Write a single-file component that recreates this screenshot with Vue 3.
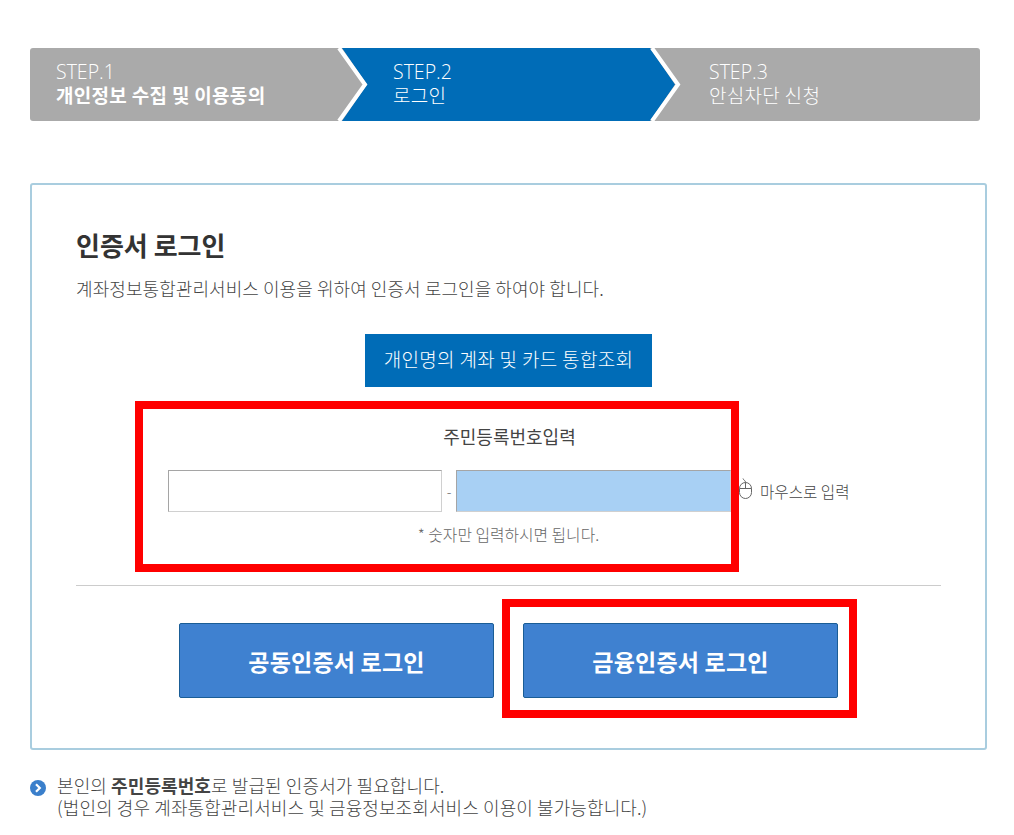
<template>
  <div class="page">
    <div class="steps">
      <svg class="steps-art" width="950" height="73" viewBox="0 0 950 73" aria-hidden="true">
        <polygon points="312,0 620,0 645,36.5 620,73 312,73 337,36.5" fill="#006cb7" />
        <polyline points="309,0 335,36.5 309,73" fill="none" stroke="#fff" stroke-width="4" />
        <polyline points="622,0 648,36.5 622,73" fill="none" stroke="#fff" stroke-width="4" />
      </svg>
      <div class="step s1"><span>STEP.1</span><strong>개인정보 수집 및 이용동의</strong></div>
      <div class="step s2"><span>STEP.2</span><span class="ko">로그인</span></div>
      <div class="step s3"><span>STEP.3</span><span class="ko">안심차단 신청</span></div>
    </div>

    <section class="card">
      <h1>인증서 로그인</h1>
      <p class="desc">계좌정보통합관리서비스 이용을 위하여 인증서 로그인을 하여야 합니다.</p>
      <div class="primary">개인명의 계좌 및 카드 통합조회</div>
      <div class="id-wrap">
        <div class="id-label">주민등록번호입력</div>
        <div class="id-row">
          <div class="field"></div>
          <span class="dash">-</span>
          <div class="field filled"></div>
          <svg class="mouse" width="16" height="24" viewBox="0 0 16 24" aria-hidden="true">
            <rect x="1.5" y="5.5" width="12" height="16" rx="6" fill="#fff" stroke="#666" />
            <path d="M1.5 11.5h12M7.5 5.5v6M7.5 5.5C7.5 3 5.5 3.5 5 1.5" fill="none" stroke="#666" />
          </svg>
          <span class="mouse-text">마우스로 입력</span>
        </div>
        <div class="hint">* 숫자만 입력하시면 됩니다.</div>
        <div class="mark mark-id"></div>
      </div>
      <hr />
      <div class="logins">
        <button class="login" type="button">공동인증서 로그인</button>
        <button class="login" type="button">금융인증서 로그인<span class="mark mark-login"></span></button>
      </div>
    </section>

    <div class="note">
      <svg class="bullet" width="16" height="16" viewBox="0 0 16 16" aria-hidden="true">
        <circle cx="8" cy="8" r="8" fill="#3a7fcb" />
        <path d="M6 4.2 9.8 8 6 11.8" fill="none" stroke="#fff" stroke-width="2.2" />
      </svg>
      <p>본인의 <b>주민등록번호</b>로 발급된 인증서가 필요합니다.<br />(법인의 경우 계좌통합관리서비스 및 금융정보조회서비스 이용이 불가능합니다.)</p>
    </div>
  </div>
</template>

<script setup>
</script>

<style>
html, body { background: #fff; }
</style>

<style scoped>
.page {
  width: 1014px;
  height: 835px;
  overflow: hidden;
  box-sizing: border-box;
  padding: 48px 27px 0 30px;
  font-family: "Noto Sans CJK KR", "Noto Sans", sans-serif;
  color: #444;
}
.steps {
  position: relative;
  display: flex;
  width: 950px;
  height: 73px;
  background: #aaa;
  border-radius: 3px;
  overflow: hidden;
  color: #fff;
  font-size: 19px;
  letter-spacing: 0.3px;
  line-height: 23px;
}
.steps-art { position: absolute; left: 0; top: 0; }
.step {
  position: relative;
  box-sizing: border-box;
  display: flex;
  flex-direction: column;
  padding: 12px 0 0 26px;
  font-weight: 300;
}
.step > span:first-child {
  font-family: "Open Sans", sans-serif;
  font-size: 19.5px;
  letter-spacing: 0;
  font-weight: 300;
}
.step strong { font-weight: 700; }
.s1 { width: 337px; }
.s2 { width: 316px; }
.s3 { flex: 1; }
.card {
  box-sizing: border-box;
  margin-top: 62px;
  width: 957px;
  height: 567px;
  border: 2px solid #a9cddf;
  border-radius: 3px;
  padding: 42px 44px 0;
}
h1 {
  margin: 0;
  font-size: 26px;
  line-height: 36px;
  font-weight: 700;
  color: #333;
}
.desc {
  margin: 12px 0 0;
  font-size: 18px;
  letter-spacing: 0.07px;
  line-height: 26px;
  font-weight: 300;
  color: #444;
}
.primary {
  margin: 33px 0 0 289px;
  width: 287px;
  height: 53px;
  background: #006cb7;
  color: #fff;
  font-size: 19px;
  letter-spacing: 0.33px;
  font-weight: 300;
  line-height: 50px;
  text-align: center;
}
.id-wrap {
  position: relative;
  height: 198px;
}
.id-label {
  position: absolute;
  top: 36px;
  left: 0;
  width: 865px;
  text-align: center;
  font-size: 18px;
  line-height: 26px;
  font-weight: 400;
  color: #444;
  text-indent: 2px;
}
.id-row {
  position: absolute;
  left: 92px;
  top: 83px;
  display: flex;
  align-items: center;
}
.field {
  box-sizing: border-box;
  width: 274px;
  height: 42px;
  background: #fff;
  border: 1px solid #d0d0d0;
  border-top-color: #a5a5a5;
  border-left-color: #a5a5a5;
}
.field.filled {
  width: 275px;
  background: #a8d0f4;
}
.dash {
  width: 14px;
  text-align: center;
  font-size: 14px;
  color: #666;
  font-weight: 300;
}
.mouse { margin-left: 7px; margin-top: -4px; }
.mouse-text {
  margin-left: 6px;
  font-size: 15.6px;
  font-weight: 300;
  color: #444;
}
.hint {
  position: absolute;
  top: 136px;
  left: 0;
  width: 865px;
  text-align: center;
  font-size: 15.8px;
  line-height: 24px;
  font-weight: 300;
  color: #666;
  text-indent: 0;
}
.mark {
  position: absolute;
  box-sizing: border-box;
  border: 8px solid #f00;
  pointer-events: none;
}
.mark-id { left: 59px; top: 14px; width: 604px; height: 171px; }
hr {
  margin: 0;
  height: 1px;
  border: 0;
  background: #ccc;
}
.logins {
  display: flex;
  gap: 29px;
  margin: 37px 0 0 103px;
}
.login {
  position: relative;
  width: 315px;
  height: 75px;
  padding: 0;
  background: #3f81d0;
  border: 1px solid #1a5d96;
  border-radius: 2px;
  color: #fff;
  font-family: inherit;
  font-size: 23px;
  letter-spacing: 0.2px;
  font-weight: 700;
}
.mark-login { left: -22px; top: -25px; width: 355px; height: 119px; }
.note {
  display: flex;
  align-items: flex-start;
  margin-top: 24px;
}
.bullet { margin: 6px 11px 0 0; flex: none; }
.note p {
  margin: 0;
  font-size: 18px;
  letter-spacing: 0.1px;
  line-height: 22px;
  font-weight: 300;
  color: #444;
}
.note b { font-weight: 700; }
</style>
